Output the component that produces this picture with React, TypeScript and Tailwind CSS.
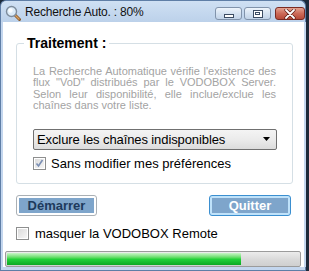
import React from 'react';

const font = "font-['Liberation_Sans',Arial,sans-serif]";

function SearchIcon() {
  return (
    <svg width="16" height="16" viewBox="0 0 16 16">
      <line x1="9.5" y1="9.5" x2="14.5" y2="14.5" stroke="#8a5a2a" strokeWidth="3" strokeLinecap="round" />
      <line x1="9.5" y1="9.5" x2="14" y2="14" stroke="#d9a060" strokeWidth="1.4" strokeLinecap="round" />
      <circle cx="6.5" cy="6.5" r="5" fill="#dcebf8" stroke="#7d8c9c" strokeWidth="1.4" />
      <circle cx="5.5" cy="5.5" r="2.2" fill="#ffffff" opacity="0.8" />
    </svg>
  );
}

function TitleButton({ kind }: { kind: 'min' | 'max' | 'close' }) {
  if (kind === 'close') {
    return (
      <div className="flex h-[13px] w-[30px] items-center justify-center rounded-[3px] border border-[#7a2a22] bg-gradient-to-b from-[#e3a190] via-[#cc6a58] to-[#b84a38]">
        <svg width="14" height="10" viewBox="0 0 14 10">
          <path d="M3 1 L11 9 M11 1 L3 9" stroke="#5a1a14" strokeWidth="3.2" strokeLinecap="round" />
          <path d="M3 1 L11 9 M11 1 L3 9" stroke="#ffffff" strokeWidth="1.8" strokeLinecap="round" />
        </svg>
      </div>
    );
  }
  return (
    <div className="flex h-[13px] w-[27px] items-center justify-center rounded-[3px] border border-[#8193ab] bg-gradient-to-b from-[#eef4fb] via-[#d5e2f1] to-[#c2d3e8]">
      {kind === 'min' ? (
        <div className="mt-[4px] h-[4px] w-[10px] border border-[#3c4c63] bg-white" />
      ) : (
        <div className="flex h-[8px] w-[10px] items-center justify-center border border-[#3c4c63] bg-white">
          <div className="h-[3px] w-[5px] border border-[#3c4c63]" />
        </div>
      )}
    </div>
  );
}

function CheckBox({ checked }: { checked?: boolean }) {
  return (
    <div className="flex h-[13px] w-[13px] shrink-0 items-center justify-center border border-[#8e8f8f] bg-white p-px">
      <div className="flex h-full w-full items-center justify-center bg-gradient-to-br from-[#dcdcdc] to-[#f6f6f6]">
        {checked && (
          <svg width="9" height="9" viewBox="0 0 9 9">
            <path d="M1.5 4.5 L3.5 7 L7.5 1" stroke="#7b8fb4" strokeWidth="1.6" fill="none" />
          </svg>
        )}
      </div>
    </div>
  );
}

export default function App() {
  return (
    <div className={`flex h-[271px] w-[309px] flex-col bg-[#1d2a3a] ${font}`}>
      {/* title bar */}
      <div className="flex h-[22px] w-[306px] items-start rounded-t-[6px] border-x border-t border-[#5f7ea6] bg-gradient-to-b from-[#cfe0f3] to-[#bcd1ea]">
        <div className="ml-[4px] mt-[4px]">
          <SearchIcon />
        </div>
        <span className="ml-[4px] mt-[4px] text-[12px] leading-[14px] tracking-[-0.2px] text-[#111]">Recherche Auto. : 80%</span>
        <div className="ml-auto mt-[6px] flex gap-[2px]">
          <TitleButton kind="min" />
          <TitleButton kind="max" />
          <div className="ml-[2px]">
            <TitleButton kind="close" />
          </div>
        </div>
      </div>

      <div className="flex h-[245px] w-[306px]">
        <div className="w-[3px] border-l border-[#5f7ea6] bg-[#c3d6ee]" />
        {/* client */}
        <div className="flex w-[301px] flex-col bg-white">
          <div className="relative ml-[13px] mt-[21px] h-[141px] w-[277px] rounded-[3px] border border-[#d5dfe5] px-[16px] pt-[22px]">
            <span className="absolute left-[7px] top-[-9px] bg-white px-[3px] text-[14px] font-bold leading-[16px] text-black">
              Traitement :
            </span>
            <p className="text-justify text-[11px] leading-[11.4px] text-[#a3a3a3]">
              La Recherche Automatique vérifie l'existence des flux "VoD" distribués par le VODOBOX Server. Selon leur disponibilité, elle inclue/exclue les chaînes dans votre liste.
            </p>
            <div className="mt-[17px] flex h-[21px] w-[244px] items-center justify-between rounded-[2px] border border-[#707070] bg-gradient-to-b from-[#f4f4f4] via-[#ebebeb] to-[#dcdcdc] pl-[3px] pr-[6px]">
              <span className="text-[13px] leading-[15px] tracking-[-0.1px] text-black">Exclure les chaînes indisponibles</span>
              <svg width="7" height="4" viewBox="0 0 7 4">
                <path d="M0 0 L7 0 L3.5 4 Z" fill="#000" />
              </svg>
            </div>
            <div className="mt-[6px] flex items-center gap-[5px]">
              <CheckBox checked />
              <span className="text-[13px] leading-[15px] text-black">Sans modifier mes préférences</span>
            </div>
          </div>

          <div className="ml-[13px] mt-[11px] flex w-[275px] justify-between">
            <div className="flex h-[21px] w-[81px] items-center justify-center rounded-[3px] border border-[#aab0b5] bg-white p-[2px]">
              <div className="flex h-full w-full items-center justify-center bg-[#7ea5cb] text-[13px] font-bold leading-[15px] text-[#1d3a5c]">
                Démarrer
              </div>
            </div>
            <div className="flex h-[21px] w-[82px] items-center justify-center rounded-[3px] border border-[#3b8fd0] bg-[#bfe2fa] p-[2px]">
              <div className="flex h-full w-full items-center justify-center bg-[#7ea5cb] text-[13px] font-bold leading-[15px] text-white">
                Quitter
              </div>
            </div>
          </div>

          <div className="ml-[13px] mt-[10px] flex items-center gap-[6px]">
            <CheckBox />
            <span className="text-[13px] leading-[15px] text-black">masquer la VODOBOX Remote</span>
          </div>

          <div className="ml-[2px] mt-[10px] h-[16px] w-[296px] overflow-hidden rounded-[2px] border border-[#9b9b9b] bg-gradient-to-b from-[#ececec] via-[#dadada] to-[#cfcfcf] p-px">
            <div
              className="h-full bg-gradient-to-b from-[#c8f5c8] via-[#22d33a] to-[#0aa823]"
              style={{ width: '80%' }}
            />
          </div>
        </div>
        <div className="w-[2px] bg-[#c3d6ee]" />
      </div>

      <div className="h-[4px] w-[306px] border-x border-b border-[#5f7ea6] bg-[#c3d6ee]" />
    </div>
  );
}
